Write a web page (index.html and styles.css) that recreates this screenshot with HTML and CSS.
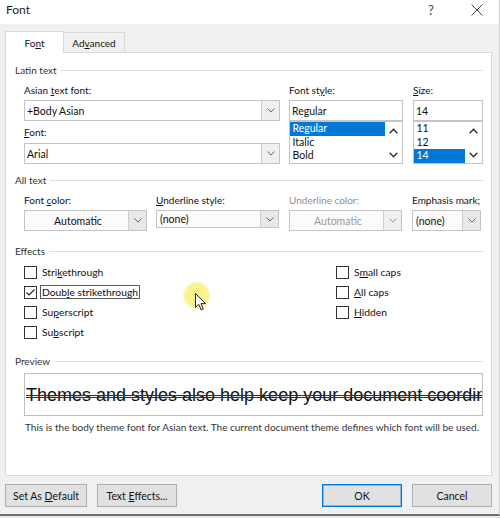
FILE: index.html
```html
<!DOCTYPE html>
<html>
<head>
<meta charset="utf-8">
<link rel="stylesheet" href="styles.css">
</head>
<body>
<div class="window">
  <div class="titlebar">
    <span class="title">Font</span>
    <span class="tb-btn help">?</span>
    <span class="tb-btn close"><svg width="12" height="12" viewBox="0 0 12 12"><path d="M0.5 0.5L11.5 11.5M11.5 0.5L0.5 11.5" stroke="#444" stroke-width="1" fill="none"/></svg></span>
  </div>
  <div class="client">
    <div class="tabs">
      <div class="tab active">Fo<u>n</u>t</div>
      <div class="tab">Ad<u>v</u>anced</div>
    </div>
    <div class="panel">
      <div class="group-title">Latin text</div>
      <div class="latin">
        <div class="lbl c1 r1">Asian <u>t</u>ext font:</div>
        <div class="combo edit c1 r2"><span class="val">+Body Asian</span><span class="dd"><svg width="8" height="5" viewBox="0 0 8 5"><polyline points="0.5,0.5 4,4 7.5,0.5" stroke="#666" fill="none"/></svg></span></div>
        <div class="lbl c3 r1">Font st<u>y</u>le:</div>
        <div class="field c3 r2">Regular</div>
        <div class="lbl c5 r1"><u>S</u>ize:</div>
        <div class="field c5 r2">14</div>
        <div class="lbl c1 r3"><u>F</u>ont:</div>
        <div class="combo edit c1 r4"><span class="val">Arial</span><span class="dd"><svg width="8" height="5" viewBox="0 0 8 5"><polyline points="0.5,0.5 4,4 7.5,0.5" stroke="#666" fill="none"/></svg></span></div>
        <div class="list c3 r34">
          <div class="items">
            <div class="item sel">Regular</div>
            <div class="item">Italic</div>
            <div class="item">Bold</div>
          </div>
          <div class="sbar">
            <span class="arrow"><svg width="9" height="6" viewBox="0 0 9 6"><polyline points="0.7,5.2 4.5,1.2 8.3,5.2" stroke="#333" stroke-width="1.4" fill="none"/></svg></span>
            <span class="arrow"><svg width="9" height="6" viewBox="0 0 9 6"><polyline points="0.7,0.8 4.5,4.8 8.3,0.8" stroke="#333" stroke-width="1.4" fill="none"/></svg></span>
          </div>
        </div>
        <div class="list c5 r34">
          <div class="items">
            <div class="item">11</div>
            <div class="item">12</div>
            <div class="item sel">14</div>
          </div>
          <div class="sbar">
            <span class="arrow"><svg width="9" height="6" viewBox="0 0 9 6"><polyline points="0.7,5.2 4.5,1.2 8.3,5.2" stroke="#333" stroke-width="1.4" fill="none"/></svg></span>
            <span class="arrow"><svg width="9" height="6" viewBox="0 0 9 6"><polyline points="0.7,0.8 4.5,4.8 8.3,0.8" stroke="#333" stroke-width="1.4" fill="none"/></svg></span>
          </div>
        </div>
      </div>

      <div class="group-title gap9">All text</div>
      <div class="alltext">
        <div class="lbl">Font <u>c</u>olor:</div>
        <div class="lbl"><u>U</u>nderline style:</div>
        <div class="lbl disabled">Underline color:</div>
        <div class="lbl">Emphasis mark;</div>
        <div class="combo drop"><span class="val center">Automatic</span><span class="dd"><svg width="8" height="5" viewBox="0 0 8 5"><polyline points="0.5,0.5 4,4 7.5,0.5" stroke="#666" fill="none"/></svg></span></div>
        <div class="combo drop short"><span class="val">(none)</span><span class="dd"><svg width="8" height="5" viewBox="0 0 8 5"><polyline points="0.5,0.5 4,4 7.5,0.5" stroke="#666" fill="none"/></svg></span></div>
        <div class="combo drop off"><span class="val center">Automatic</span><span class="dd"><svg width="8" height="5" viewBox="0 0 8 5"><polyline points="0.5,0.5 4,4 7.5,0.5" stroke="#999" fill="none"/></svg></span></div>
        <div class="combo drop"><span class="val">(none)</span><span class="dd"><svg width="8" height="5" viewBox="0 0 8 5"><polyline points="0.5,0.5 4,4 7.5,0.5" stroke="#666" fill="none"/></svg></span></div>
      </div>

      <div class="group-title gap13">Effects</div>
      <div class="effects">
        <div class="col">
          <div class="chk"><span class="box"></span><span class="txt">Stri<u>k</u>ethrough</span></div>
          <div class="chk"><span class="box"><svg width="11" height="11" viewBox="0 0 11 11"><polyline points="1.5,5.5 4,8 9.5,2.5" stroke="#222" stroke-width="1.1" fill="none"/></svg></span><span class="txt focus">Doub<u>l</u>e strikethrough</span></div>
          <div class="chk"><span class="box"></span><span class="txt">Su<u>p</u>erscript</span></div>
          <div class="chk"><span class="box"></span><span class="txt">Su<u>b</u>script</span></div>
        </div>
        <div class="col">
          <div class="chk"><span class="box"></span><span class="txt">S<u>m</u>all caps</span></div>
          <div class="chk"><span class="box"></span><span class="txt"><u>A</u>ll caps</span></div>
          <div class="chk"><span class="box"></span><span class="txt"><u>H</u>idden</span></div>
        </div>
      </div>

      <div class="group-title gap12">Preview</div>
      <div class="preview"><span class="sample">Themes and styles also help keep your document coordinated.</span></div>
      <div class="desc">This is the body theme font for Asian text. The current document theme defines which font will be used.</div>
    </div>
    <div class="buttons">
      <div class="btn wide"><span>Set As <u>D</u>efault</span></div>
      <div class="btn"><span>Text <u>E</u>ffects...</span></div>
      <div class="btn primary push"><span>OK</span></div>
      <div class="btn"><span>Cancel</span></div>
    </div>
  </div>
  <div class="spot"></div>
  <svg class="cursor" width="12" height="18" viewBox="0 0 12 18"><path d="M0.5 0.5 L0.5 14.5 L3.8 11.4 L6.2 16.9 L8.3 16 L6 10.6 L10.5 10.6 Z" fill="#fff" stroke="#222" stroke-width="1"/></svg>
</div>
</body>
</html>
```

FILE: styles.css
```css
* { box-sizing: border-box; }
html, body { margin: 0; padding: 0; }
body {
  background: #e9e9e9;
  font-family: Lato, "Noto Sans", sans-serif;
  color: #111;
}
u { text-underline-offset: 1px; text-decoration-thickness: 1px; }

.window {
  position: relative;
  width: 500px;
  height: 516px;
  background: #f0f0f0;
  border-right: 1px solid #d0d0d0;
  border-bottom: 2px solid #6e6e6e;
  display: flex;
  flex-direction: column;
}

.titlebar {
  height: 24px;
  background: #fff;
  display: flex;
  align-items: flex-start;
  padding-left: 6px;
  padding-right: 11px;
}
.title { font-size: 12px; line-height: 20px; color: #222; }
.tb-btn {
  width: 22px;
  height: 20px;
  display: flex;
  align-items: center;
  justify-content: center;
  color: #444;
}
.help { margin-left: auto; font-size: 13px; }
.close { margin-left: 24px; }

.client {
  flex: 1;
  padding: 7px 7px 0 5px;
}

.tabs {
  display: flex;
  align-items: flex-end;
  height: 21px;
}
.tab {
  font-size: 10px;
  height: 20px;
  line-height: 20px;
  text-align: center;
  border: 1px solid #d9d9d9;
  border-bottom: none;
  border-left: none;
  background: #f0f0f0;
  width: 61px;
}
.tab.active {
  position: relative;
  z-index: 1;
  background: #fff;
  height: 22px;
  line-height: 22px;
  margin-bottom: -1px;
  width: 59px;
  border-left: 1px solid #d9d9d9;
}

.panel {
  background: #fff;
  border: 1px solid #d9d9d9;
  height: 424px;
  padding: 10px 8px 0 9px;
}

.group-title {
  display: flex;
  align-items: center;
  height: 14px;
  font-size: 10px;
  color: #333;
  gap: 4px;
}
.group-title::after {
  content: "";
  flex: 1;
  height: 1px;
  background: #dddddd;
}
.gap9 { margin-top: 9px; }
.gap13 { margin-top: 13px; }
.gap12 { margin-top: 12px; }

.lbl {
  font-size: 10px;
  line-height: 19px;
  white-space: nowrap;
}
.lbl.disabled { color: #8e8e8e; }

.latin {
  margin-top: 4px;
  margin-left: 9px;
  display: grid;
  grid-template-columns: 256px 9px 114px 10px 70px;
  grid-template-rows: 19px 21px 22px 21px;
}
.c1 { grid-column: 1; }
.c3 { grid-column: 3; }
.c5 { grid-column: 5; }
.r1 { grid-row: 1; }
.r2 { grid-row: 2; }
.r3 { grid-row: 3; line-height: 22px; }
.r4 { grid-row: 4; }
.r34 { grid-row: 3 / 5; }

.field, .combo {
  border: 1px solid #c4c4c4;
  background: #fff;
  font-size: 10.5px;
  height: 21px;
  display: flex;
  align-items: center;
}
.field { padding-left: 2px; }
.combo .val {
  flex: 1;
  padding-left: 2px;
  white-space: nowrap;
}
.combo .val.center { text-align: center; }
.combo .dd {
  width: 18px;
  align-self: stretch;
  background: #e8e8e8;
  border-left: 1px solid #cdcdcd;
  display: flex;
  align-items: center;
  justify-content: center;
}
.combo.edit .dd { background: #efefef; }

.list {
  border: 1px solid #c4c4c4;
  display: flex;
  font-size: 10.5px;
}
.items { flex: 1; }
.item {
  height: 13.5px;
  line-height: 13.5px;
  padding-left: 2.5px;
}
.item.sel { background: #0078d7; color: #fff; }
.sbar {
  width: 17px;
  display: flex;
  flex-direction: column;
  justify-content: space-between;
}
.arrow {
  height: 17px;
  display: flex;
  align-items: center;
  justify-content: center;
}

.alltext {
  margin-top: 4px;
  margin-left: 9px;
  display: grid;
  grid-template-columns: 123px 123px 114px 70px;
  column-gap: 9px;
  grid-template-rows: 19px 21px;
}
.alltext > :nth-child(3), .alltext > :nth-child(4),
.alltext > :nth-child(7), .alltext > :nth-child(8) { margin-left: 1px; }
.combo.drop { background: #fbfbfb; }
.combo.drop .val { padding-left: 3px; }
.combo.short { height: 18px; }
.combo.off { color: #9a9a9a; }
.combo.off .dd { background: #efefef; }

.effects {
  margin-top: 4px;
  margin-left: 9px;
  display: grid;
  grid-template-columns: 312px auto;
}
.chk {
  height: 20px;
  display: flex;
  align-items: center;
  gap: 3px;
}
.box {
  width: 13px;
  height: 13px;
  border: 1px solid #333;
  background: #fff;
  display: flex;
  align-items: center;
  justify-content: center;
}
.txt {
  font-size: 10.3px;
  line-height: 12px;
  padding: 0 1px;
  border: 1px solid transparent;
  white-space: nowrap;
}
.txt.focus { border: 1px solid #5a5a5a; }

.preview {
  margin-top: 5px;
  margin-left: 9px;
  width: 459px;
  height: 43px;
  border: 1px solid #bfbfbf;
  padding: 1px 0 0 1px;
  overflow: hidden;
  white-space: nowrap;
  font-family: "Liberation Sans", Arial, sans-serif;
  font-size: 18px;
  line-height: 40px;
  color: #111;
}
.sample {
  text-decoration: line-through double #333;
}
.desc {
  margin-top: 4px;
  margin-left: 10px;
  font-size: 10px;
  line-height: 14px;
  color: #333;
  white-space: nowrap;
}

.buttons {
  margin-top: 8px;
  display: flex;
  gap: 10px;
}
.btn {
  width: 80px;
  height: 23px;
  background: #e1e1e1;
  border: 1px solid #adadad;
  font-size: 10.5px;
  display: flex;
  align-items: center;
  justify-content: center;
  white-space: nowrap;
}
.btn.wide { width: 82px; }
.btn.push { margin-left: auto; }
.btn.primary { border: 1px solid #0078d7; box-shadow: inset 0 0 0 1px #7ab8ea; }

.spot {
  position: absolute;
  left: 183px;
  top: 282px;
  width: 27px;
  height: 27px;
  border-radius: 50%;
  background: radial-gradient(circle, rgba(250, 240, 120, 0.9) 0%, rgba(250, 240, 120, 0.8) 55%, rgba(250, 240, 120, 0) 100%);
}
.cursor {
  position: absolute;
  left: 195px;
  top: 293px;
}
```
